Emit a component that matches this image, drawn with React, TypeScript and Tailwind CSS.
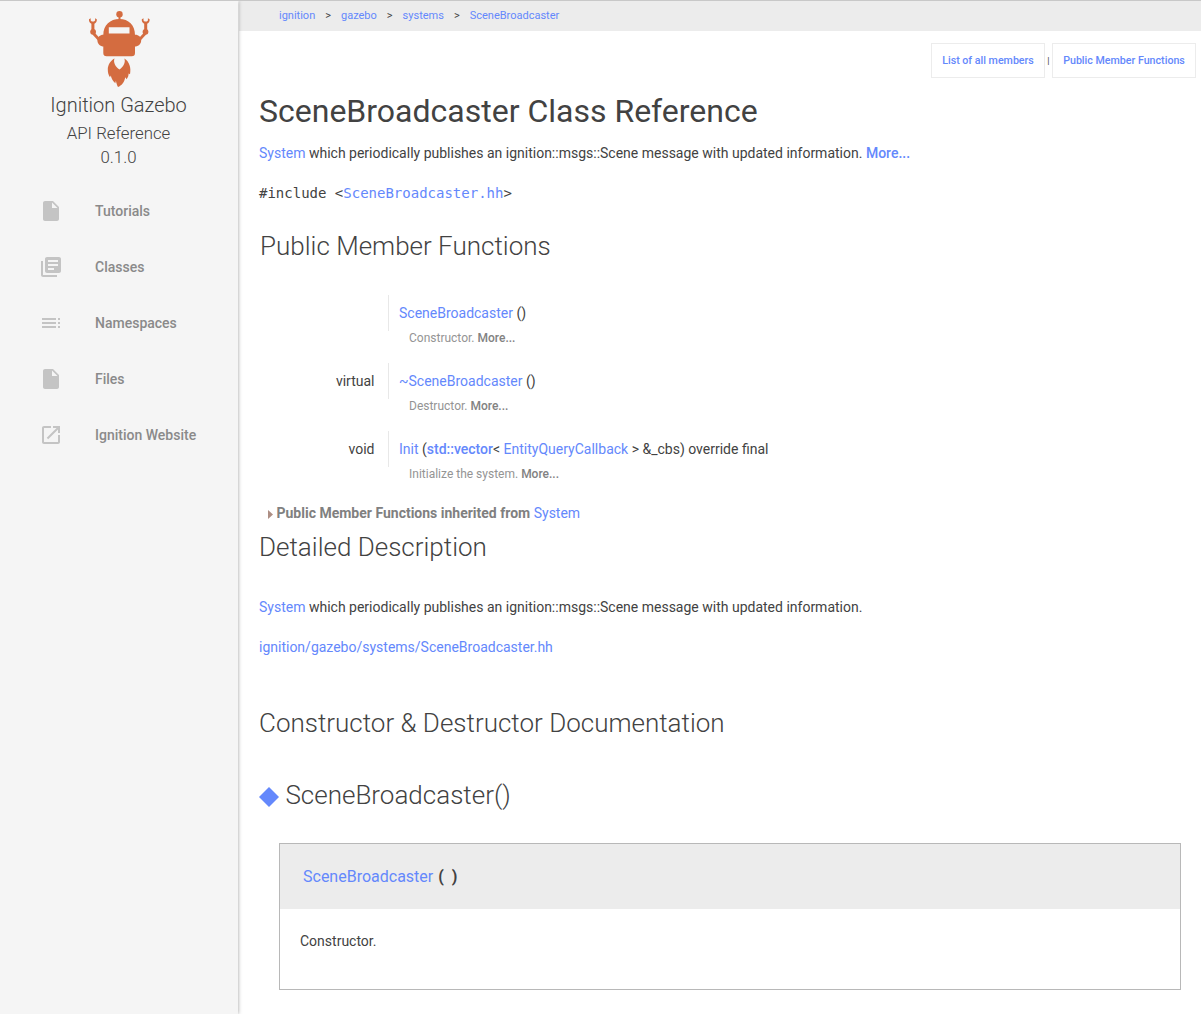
import React from "react";

function Link({ children, className = "" }: { children: React.ReactNode; className?: string }) {
  return <a className={`cursor-pointer text-[#6488fc] ${className}`}>{children}</a>;
}

function Arm() {
  return (
    <g>
      <path d="M90.700 18.300L89 19.200C88.700 21.500 89.800 23 91.400 23.700V30.500H94.400V23.700C96 23 97.100 21.500 96.800 19.200L95.100 18.300V20.600L94 21.600H91.800L90.700 20.600z" />
      <circle cx="93.100" cy="31.800" r="2.900" />
      <path d="M93.500 33.500L99 39.500" stroke="#d46c40" strokeWidth="2.800" />
      <path d="M104 34.800C100 34.500 97.800 37 97.400 40C97.400 44 100 46.500 104 46.500z" />
    </g>
  );
}

function Logo() {
  return (
    <svg className="mx-auto mt-[10px] block h-[78px] w-[62px]" viewBox="88 11 62 78" fill="#d46c40">
      <circle cx="119.500" cy="14.200" r="3.200" />
      <path d="M118.500 16h2v4h-2z" />
      <path
        fillRule="evenodd"
        d="M103.300 53V35c0-10 7-16 16.100-16S135 25 135 35v18q0 3.300-3.300 3.300h-25.100q-3.300 0-3.300-3.300zM108.800 27.300v6.200h20.700v-6.200z"
      />
      <Arm />
      <g transform="translate(238.600 0) scale(-1 1)">
        <Arm />
      </g>
      <path d="M114.500 58.500C110.500 60.500 107.800 65 107.800 69.500C107.800 73 108.500 75 110 77.200L110.800 75.600C111.500 79 112.800 81.300 115.300 83.200L115.900 80.800C116.500 83.500 117 85.500 118 87C121.500 85.500 124.500 82.300 125.200 77.200L126.600 79.200C128 77.500 128.600 75.500 128.600 73.500L130 74.200C131.300 68 129.500 61.500 124.300 58.500C126 62.500 123.200 66.800 119.500 69.500C115.500 67 113 62.500 114.500 58.500z" />
    </svg>
  );
}

const icons = {
  file: "M6 2c-1.100 0-1.990.9-1.990 2L4 20c0 1.100.89 2 1.990 2H18c1.100 0 2-.9 2-2V8l-6-6H6zm7 7V3.500L18.500 9H13z",
  library: "M4 6H2v14c0 1.100.9 2 2 2h14v-2H4V6zm16-4H8c-1.100 0-2 .9-2 2v12c0 1.100.9 2 2 2h12c1.100 0 2-.9 2-2V4c0-1.100-.9-2-2-2zm-1 9H9V9h10v2zm-4 4H9v-2h6v2zm4-8H9V5h10v2z",
  toc: "M3 9h14V7H3v2zm0 4h14v-2H3v2zm0 4h14v-2H3v2zm16 0h2v-2h-2v2zm0-10v2h2V7h-2zm0 6h2v-2h-2v2z",
  launch: "M19 19H5V5h7V3H5c-1.110 0-2 .9-2 2v14c0 1.100.89 2 2 2h14c1.100 0 2-.9 2-2v-7h-2v7zM14 3v2h3.590l-9.830 9.830 1.410 1.410L19 6.410V10h2V3h-7z",
};

const nav = [
  { label: "Tutorials", icon: icons.file },
  { label: "Classes", icon: icons.library },
  { label: "Namespaces", icon: icons.toc },
  { label: "Files", icon: icons.file },
  { label: "Ignition Website", icon: icons.launch },
];

function Sidebar() {
  return (
    <aside className="z-10 mr-px w-[238px] shrink-0 bg-[#f5f5f5] shadow-[0_0_4px_rgba(0,0,0,0.4)]">
      <Logo />
      <div className="pr-px text-center font-light text-[#424242]">
        <div className="h-8 text-[20px] leading-8">Ignition Gazebo</div>
        <div className="h-6 text-[16.800px] leading-6">API Reference</div>
        <div className="h-6 text-[16.800px] leading-6">0.1.0</div>
      </div>
      <nav className="mt-[14px]">
        {nav.map((n) => (
          <a key={n.label} className="flex h-14 items-center pl-[39px] text-[14px] font-medium text-[#8a8a8a]">
            <svg viewBox="0 0 24 24" className="mr-8 h-6 w-6" fill="#c4c4c4">
              <path d={n.icon} />
            </svg>
            {n.label}
          </a>
        ))}
      </nav>
    </aside>
  );
}

function Member({ type, children, desc }: { type: string; children: React.ReactNode; desc: string }) {
  return (
    <div className="h-[68px]">
      <div className="flex h-9 text-[14px] leading-9">
        <div className="w-[130px] border-r border-[#e8e8e8] pr-[13.500px] text-right">{type}</div>
        <div className="pl-[10px]">{children}</div>
      </div>
      <div className="pl-[150px] text-[12px] leading-[14px] text-[#949494]">
        {desc} <b className="font-medium text-[#828282]">More...</b>
      </div>
    </div>
  );
}

export default function App() {
  return (
    <div className="flex h-[1014px] overflow-hidden border-t border-[#c8c8c8] bg-white font-['Roboto',sans-serif] text-[14px] text-[#424242]">
      <Sidebar />
      <main className="min-w-0 flex-1">
        <div className="flex h-[30px] bg-[#ececec] pl-10 text-[11px] leading-[30px] text-[#424242]">
          <Link>ignition</Link>
          <span className="mx-[10px]">&gt;</span>
          <Link>gazebo</Link>
          <span className="mx-[10px]">&gt;</span>
          <Link>systems</Link>
          <span className="mx-[10px]">&gt;</span>
          <Link>SceneBroadcaster</Link>
        </div>
        <div className="mt-3 mr-[5px] flex h-[35px] justify-end text-[10.660px] leading-[34px]">
          <Link className="w-[114px] border border-[#ececec] text-center font-medium">List of all members</Link>
          <span className="w-[7px] pt-px text-center text-[9.300px]">|</span>
          <Link className="w-[144px] border border-[#ececec] text-center font-medium">Public Member Functions</Link>
        </div>
        <div className="pr-5 pl-5">
          <h1 className="mt-[13px] h-10 text-[32px] leading-10">SceneBroadcaster Class Reference</h1>
          <p className="mt-3 h-5 leading-5">
            <Link>System</Link> which periodically publishes an ignition::msgs::Scene message with updated information.{" "}
            <Link className="font-medium">More...</Link>
          </p>
          <p className="mt-5 h-5 font-['DejaVu_Sans_Mono',monospace] leading-5">
            #include &lt;<Link>SceneBroadcaster.hh</Link>&gt;
          </p>
          <h2 className="mt-[27px] h-8 pl-px text-[26px] leading-8 font-light">Public Member Functions</h2>
          <div className="mt-[33px]">
            <Member type="" desc="Constructor.">
              <Link>SceneBroadcaster</Link> ()
            </Member>
            <Member type="virtual" desc="Destructor.">
              <Link>~SceneBroadcaster</Link> ()
            </Member>
            <Member type="void" desc="Initialize the system.">
              <Link>Init</Link> (<Link className="font-medium">std::vector</Link>&lt; <Link>EntityQueryCallback</Link> &gt;
              &amp;_cbs) override final
            </Member>
          </div>
          <div className="mt-[4px] flex h-5 items-center pl-[9px] leading-5">
            <svg viewBox="0 0 5 9" className="mt-[3px] mr-[3.500px] h-[9px] w-[5px]" fill="#ad8e84">
              <path d="M0 0L5 4.500L0 9z" />
            </svg>
            <b className="mr-[3.500px] font-bold text-[#808080]">Public Member Functions inherited from</b>
            <Link>System</Link>
          </div>
          <h2 className="mt-[8px] h-8 text-[26px] leading-8 font-light">Detailed Description</h2>
          <p className="mt-[34px] h-5 leading-5">
            <Link>System</Link> which periodically publishes an ignition::msgs::Scene message with updated information.
          </p>
          <p className="mt-5 h-5 leading-5">
            <Link>ignition/gazebo/systems/SceneBroadcaster.hh</Link>
          </p>
          <h2 className="mt-[50px] h-8 text-[26px] leading-8 font-light">Constructor &amp; Destructor Documentation</h2>
          <h2 className="mt-10 flex h-8 items-center text-[26px] leading-8 font-light">
            <svg viewBox="0 0 20 20" className="mt-1 mr-[6.400px] h-5 w-5" fill="#6488fc">
              <path d="M10 0L20 10L10 20L0 10z" />
            </svg>
            SceneBroadcaster()
          </h2>
          <div className="mt-8 ml-5 h-[147px] border border-[#b8b8b8]">
            <div className="h-[65px] bg-[#ececec] pl-[23px] text-[16px] leading-[65px]">
              <Link>SceneBroadcaster</Link> <b className="ml-px font-bold">(&nbsp; )</b>
            </div>
            <p className="pt-[22px] pl-5 leading-5">Constructor.</p>
          </div>
        </div>
      </main>
    </div>
  );
}
